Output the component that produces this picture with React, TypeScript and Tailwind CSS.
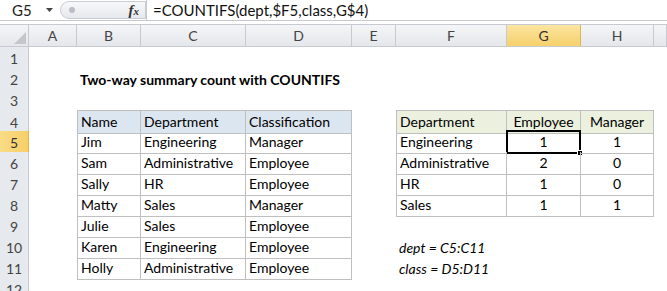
import React from "react";

const COLS = ["", "A", "B", "C", "D", "E", "F", "G", "H", ""];
const FONT = { fontFamily: "Lato, 'Open Sans', sans-serif" };

type Cell = {
  text?: string;
  bold?: boolean;
  italic?: boolean;
  center?: boolean;
  bg?: string;
  box?: boolean;
  left?: boolean;
  top?: boolean;
};

const people = [
  ["Jim", "Engineering", "Manager"],
  ["Sam", "Administrative", "Employee"],
  ["Sally", "HR", "Employee"],
  ["Matty", "Sales", "Manager"],
  ["Julie", "Sales", "Employee"],
  ["Karen", "Engineering", "Employee"],
  ["Holly", "Administrative", "Employee"],
];

const summary = [
  ["Engineering", "1", "1"],
  ["Administrative", "2", "0"],
  ["HR", "1", "0"],
  ["Sales", "1", "1"],
];

// Build the sheet contents: rows 1..12, columns A..I (index 1..9)
function buildSheet(): Cell[][] {
  const rows: Cell[][] = [];
  for (let r = 1; r <= 12; r++) {
    const row: Cell[] = [];
    for (let c = 1; c <= 9; c++) row.push({});
    rows.push(row);
  }
  rows[1][1] = { text: "Two-way summary count with COUNTIFS", bold: true };
  // left table header (row 4, B..D)
  ["Name", "Department", "Classification"].forEach((t, i) => {
    rows[3][1 + i] = { text: t, bg: "bg-[#dce6f1]", box: true, left: i === 0, top: true };
  });
  people.forEach((p, ri) => {
    p.forEach((t, i) => {
      rows[4 + ri][1 + i] = { text: t, box: true, left: i === 0 };
    });
  });
  // right table header (row 4, F..H)
  ["Department", "Employee", "Manager"].forEach((t, i) => {
    rows[3][5 + i] = { text: t, bg: "bg-[#ebf1de]", box: true, left: i === 0, top: true, center: i > 0 };
  });
  summary.forEach((s, ri) => {
    s.forEach((t, i) => {
      rows[4 + ri][5 + i] = { text: t, box: true, left: i === 0, center: i > 0 };
    });
  });
  rows[9][5] = { text: "dept = C5:C11", italic: true };
  rows[10][5] = { text: "class = D5:D11", italic: true };
  return rows;
}

function FormulaBar() {
  return (
    <div className="flex h-[21px] items-stretch border-b border-[#c6c9ce] bg-white" style={FONT}>
      <div className="flex w-[60px] items-center justify-between pl-[12px] pr-[6px] text-[15px] text-[#222]">
        <span>G5</span>
        <svg width="8" height="5" viewBox="0 0 8 5">
          <path d="M0 0h7L3.5 4z" fill="#444" />
        </svg>
      </div>
      <div className="my-[1px] flex w-[86px] items-center justify-between rounded-l-[10px] border border-[#c9cdd2] bg-gradient-to-b from-[#f7f8f9] to-[#e6e8eb] pl-[8px] pr-[6px]">
        <span className="h-[6px] w-[6px] rounded-full bg-[#b9bec4]" />
        <span
          className="text-[15px] font-bold italic text-[#333]"
          style={{ fontFamily: "'Liberation Serif', serif" }}
        >
          f<span className="text-[11px]">x</span>
        </span>
      </div>
      <div className="flex flex-1 items-center border-l border-[#c6c9ce] pl-[6px] text-[15px] text-[#111]">
        =COUNTIFS(dept,$F5,class,G$4)
      </div>
    </div>
  );
}

export default function App() {
  const sheet = buildSheet();
  const grid =
    "grid grid-cols-[29px_48px_64px_105px_106px_44px_111px_74px_73px_1fr]";

  return (
    <div className="h-[291px] w-[667px] overflow-hidden bg-white" style={FONT}>
      <FormulaBar />
      <div className="h-[3px] bg-white" />
      {/* column headers */}
      <div className={`${grid} h-[23px] border-b border-t border-[#c7cbd1]`}>
        {COLS.map((c, i) => (
          <div
            key={i}
            className={`relative flex items-center justify-center border-r text-[14px] ${
              i === 7
                ? "border-[#e2b44f] bg-gradient-to-b from-[#fbe5a0] to-[#f6d06a] text-[#333]"
                : "border-[#c7cbd1] bg-gradient-to-b from-[#f4f5f7] to-[#e4e7eb] text-[#444]"
            }`}
          >
            {i === 0 ? (
              <svg className="absolute bottom-[2px] right-[2px]" width="12" height="12" viewBox="0 0 12 12">
                <path d="M12 0v12H0z" fill="#c3c6cb" />
              </svg>
            ) : (
              c
            )}
          </div>
        ))}
      </div>
      {/* rows */}
      {sheet.map((row, ri) => (
        <div key={ri} className={`${grid} h-[21px]`}>
          <div
            className={`flex items-center justify-center border-b border-r pt-[1px] text-[14px] ${
              ri === 4
                ? "border-[#e2b44f] bg-gradient-to-r from-[#f9dc87] to-[#f7cf66] text-[#333]"
                : "border-[#c7cbd1] bg-[#e6e9ed] text-[#444]"
            }`}
          >
            {ri + 1}
          </div>
          {row.map((cell, ci) => (
            <div
              key={ci}
              className={`relative flex items-end whitespace-nowrap px-[3px] pb-[1px] text-[14px] text-black ${
                cell.center ? "justify-center" : ""
              } ${cell.bold ? "text-[13px] font-bold" : ""} ${cell.italic ? "italic" : ""} ${cell.bg ?? ""} ${
                cell.box ? "border-b border-r border-[#bfbfbf]" : ""
              } ${cell.left ? "border-l" : ""} ${cell.top ? "border-t" : ""}`}
            >
              {cell.text}
              {ri === 4 && ci === 6 && (
                <>
                  <div className="pointer-events-none absolute -left-[1px] -top-[1px] bottom-[-1px] right-[-1px] border-2 border-black" />
                  <div className="absolute -bottom-[3px] -right-[3px] h-[6px] w-[6px] border border-white bg-black" />
                </>
              )}
            </div>
          ))}
        </div>
      ))}
    </div>
  );
}
